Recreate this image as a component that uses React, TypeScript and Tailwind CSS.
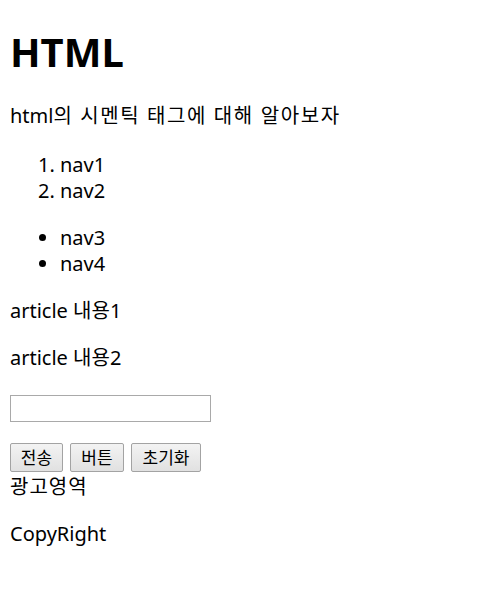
const navOrdered = ['nav1', 'nav2']
const navUnordered = ['nav3', 'nav4']
const articles = ['article 내용1', 'article 내용2']
const buttons = [
  { label: '전송', width: 'w-[53px]' },
  { label: '버튼', width: 'w-[54px]' },
  { label: '초기화', width: 'w-[70px]' },
]

export default function App() {
  return (
    <div className="min-h-screen bg-white px-[10px] pt-[25px] font-['Noto_Sans','Noto_Sans_CJK_KR',sans-serif] text-[20px] leading-[26.6px] text-black">
      <header>
        <h1 className="mb-[25px] text-[40px] font-bold leading-[53px]">HTML</h1>
        <p className="mb-[22px]">
          html<span className="tracking-[1.6px]">의 시멘틱 태그에 대해 알아보자</span>
        </p>
      </header>

      <nav>
        <ol className="mb-[20px] list-decimal pl-[50px]">
          {navOrdered.map((item) => (
            <li key={item}>{item}</li>
          ))}
        </ol>
        <ul className="mb-[20px] list-disc pl-[50px]">
          {navUnordered.map((item) => (
            <li key={item}>{item}</li>
          ))}
        </ul>
      </nav>

      <main>
        {articles.map((text, i) => (
          <article key={i}>
            <p className={i === articles.length - 1 ? 'mb-[24px]' : 'mb-[20px]'}>{text}</p>
          </article>
        ))}

        <form onSubmit={(e) => e.preventDefault()}>
          <input
            type="text"
            className="block h-[27px] w-[201px] border border-[#a9a9a9] bg-white px-[2px] outline-none"
          />
          <div className="mt-[21px] flex gap-[7px]">
            {buttons.map((b) => (
              <button
                key={b.label}
                type="button"
                className={`${b.width} flex h-[29px] items-center justify-center rounded-[2px] border border-[#a3a3a3] bg-gradient-to-b from-[#f3f3f3] to-[#e1e1e1] text-[17px] leading-none`}
              >
                {b.label}
              </button>
            ))}
          </div>
        </form>
      </main>

      <aside className="mt-[2px] tracking-[1px]">광고영역</aside>

      <footer className="mt-[20px]">
        <p>CopyRight</p>
      </footer>
    </div>
  )
}
